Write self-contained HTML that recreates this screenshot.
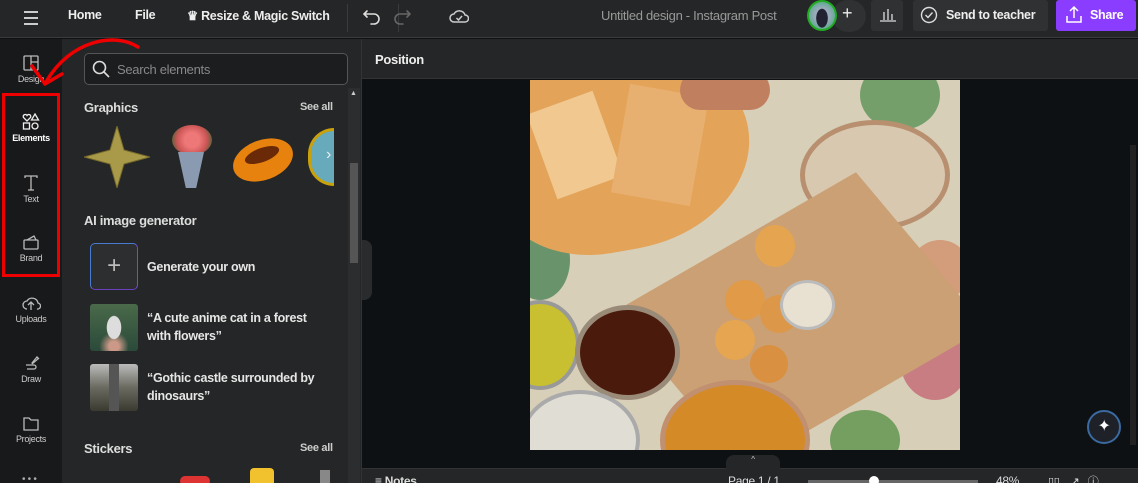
<!DOCTYPE html>
<html><head><style>
*{box-sizing:border-box;margin:0;padding:0}
html,body{width:1138px;height:483px;overflow:hidden}
body{background:#0e1114;font-family:"Liberation Sans",sans-serif;position:relative;color:#fff;letter-spacing:-0.3px}
.a{position:absolute}
.top{left:0;top:0;width:1138px;height:38px;background:#252627;border-bottom:1px solid #3a3b3d}
.tb{font-weight:bold;font-size:12.5px;color:#eee;top:8px}
.rail{left:0;top:39px;width:62px;height:444px;background:#18191b}
.ri{width:62px;text-align:center;font-size:9px;color:#ccc}
.panel{left:62px;top:39px;width:300px;height:444px;background:#252627;border-right:1px solid #333}
.h{font-weight:bold;font-size:13px;color:#ddd}
.sa{font-size:11px;font-weight:bold;color:#ccc}
.it{font-weight:bold;font-size:12.5px;color:#e6e6e6;line-height:18px}
.img div{position:absolute}
.c{border-radius:50%}
</style></head><body>
<div class="a top"></div>
<div class="a" style="left:24px;top:9px;width:14px;height:16px">
<div style="height:2px;background:#ccc;margin-top:2px"></div><div style="height:2px;background:#ccc;margin-top:4px"></div><div style="height:2px;background:#ccc;margin-top:4px"></div></div>
<div class="a tb" style="left:68px">Home</div>
<div class="a tb" style="left:135px">File</div>
<div class="a tb" style="left:187px">♛ Resize &amp; Magic Switch</div>
<div class="a" style="left:347px;top:4px;width:1px;height:28px;background:#3a3b3d"></div>
<div class="a" style="left:398px;top:4px;width:1px;height:28px;background:#3a3b3d"></div>
<svg class="a" style="left:362px;top:6px" width="60" height="20" fill="none" stroke-width="1.6" stroke-linecap="round"><path d="M5 5 L2 8 L5 11 M2 8 H12 a5 5 0 0 1 0 10 H9" stroke="#ddd"/><path d="M45 5 L48 8 L45 11 M48 8 H38 a5 5 0 0 0 0 10 H41" stroke="#666"/></svg>
<svg class="a" style="left:449px;top:6px" width="20" height="20" fill="none" stroke="#ccc" stroke-width="1.5"><path d="M5 16 a4 4 0 0 1 0-8 a6 6 0 0 1 11 1 a3.5 3.5 0 0 1 0 7 Z"/><path d="M7.5 12 l2 2 l3.5-4"/></svg>
<div class="a" style="left:601px;top:8px;font-size:13px;color:#999">Untitled design - Instagram Post</div>
<div class="a" style="left:832px;top:0px;width:34px;height:32px;border-radius:16px;background:#303133"></div>
<div class="a" style="left:807px;top:0px;width:30px;height:31px;border-radius:50%;background:radial-gradient(ellipse 8px 13px at 50% 60%,#223 70%,transparent 75%),radial-gradient(circle,#9ab 40%,#5a8 80%);border:2px solid #2a2"></div>
<div class="a" style="left:842px;top:3px;font-size:18px;color:#eee">+</div>
<div class="a" style="left:871px;top:0;width:32px;height:31px;background:#303133;border-radius:3px"></div>
<svg class="a" style="left:879px;top:7px" width="18" height="16" stroke="#ddd" stroke-width="1.3"><path d="M1 14H17M5 13V5M9 13V2M13 13V7"/></svg>
<div class="a" style="left:913px;top:0;width:135px;height:31px;background:#303133;border-radius:3px"></div>
<svg class="a" style="left:920px;top:6px" width="20" height="20" fill="none" stroke="#ddd" stroke-width="1.4"><circle cx="9" cy="9" r="7.5"/><path d="M5.5 9l2.5 2.5 4.5-5"/></svg>
<div class="a tb" style="left:946px">Send to teacher</div>
<div class="a" style="left:1056px;top:0;width:80px;height:31px;background:#8b3dff;border-radius:3px"></div>
<svg class="a" style="left:1064px;top:5px" width="20" height="20" fill="none" stroke="#fff" stroke-width="1.5"><path d="M3 11v6h14v-6M10 13V2M6 6l4-4 4 4"/></svg>
<div class="a tb" style="left:1090px;color:#fff">Share</div>

<div class="a rail"></div>
<div class="a" style="left:63px;top:44px;width:5px;height:180px;background:#555;border-radius:2px"></div>
<div class="a ri" style="left:0;top:54px"><svg width="18" height="18" fill="none" stroke="#bbb" stroke-width="1.3"><rect x="2" y="2" width="14" height="14" rx="1"/><path d="M9 2v14M9 8h7"/></svg><br>Design</div>
<div class="a ri" style="left:0;top:113px;color:#fff;font-weight:bold"><svg width="18" height="18" fill="none" stroke="#eee" stroke-width="1.3"><path d="M5 8L1.5 4.5a2 2 0 0 1 3.5-2 2 2 0 0 1 3.5 2z"/><path d="M13 1l3.5 6h-7z"/><rect x="1.5" y="10" width="6" height="6"/><circle cx="13" cy="13" r="3"/></svg><br>Elements</div>
<div class="a ri" style="left:0;top:174px"><svg width="18" height="18" fill="none" stroke="#bbb" stroke-width="1.3"><path d="M3 4V2h12v2M9 2v14M6 16h6"/></svg><br>Text</div>
<div class="a ri" style="left:0;top:233px"><svg width="18" height="18" fill="none" stroke="#bbb" stroke-width="1.3"><rect x="2" y="7" width="14" height="9" rx="1"/><path d="M5 7l7-4 2 4"/></svg><br>Brand</div>
<div class="a ri" style="left:0;top:294px"><svg width="20" height="18" fill="none" stroke="#bbb" stroke-width="1.3"><path d="M6 15a4 4 0 0 1 0-8 6 6 0 0 1 11 2 3 3 0 0 1-1 6"/><path d="M10 16V9M7 11l3-3 3 3"/></svg><br>Uploads</div>
<div class="a ri" style="left:0;top:354px"><svg width="18" height="18" fill="none" stroke="#bbb" stroke-width="1.3"><path d="M10 9l5-6 1.5 1.5-6 5zM4 11h8a2 2 0 0 1 0 4H5"/></svg><br>Draw</div>
<div class="a ri" style="left:0;top:414px"><svg width="18" height="18" fill="none" stroke="#bbb" stroke-width="1.3"><path d="M2 4h5l2 2h7v10H2z"/></svg><br>Projects</div>
<div class="a" style="left:22px;top:474px;font-size:10px;color:#aaa">• • •</div>
<div class="a" style="left:2px;top:93px;width:58px;height:184px;border:3px solid #e00"></div>

<div class="a panel"></div>
<div class="a" style="left:84px;top:53px;width:264px;height:32px;border:1px solid #555;border-radius:5px;background:#1c1d1f"></div>
<svg class="a" style="left:92px;top:60px" width="18" height="18" fill="none" stroke="#ddd" stroke-width="1.6"><circle cx="7.5" cy="7.5" r="6"/><path d="M12 12l5 5"/></svg>
<div class="a" style="left:117px;top:62px;font-size:13px;color:#888">Search elements</div>
<div class="a" style="left:348px;top:88px;width:12px;height:395px;background:#2c2d2f"></div>
<div class="a" style="left:350px;top:163px;width:8px;height:100px;background:#555"></div>
<div class="a" style="left:350px;top:90px;font-size:7px;color:#ccc">▲</div>
<div class="a h" style="left:84px;top:100px">Graphics</div>
<div class="a sa" style="left:300px;top:101px">See all</div>
<svg class="a" style="left:84px;top:126px" width="66" height="62"><polygon points="33,0 40,24 66,31 40,38 33,62 26,38 0,31 26,24" fill="#a89a48" stroke="#776a2a"/></svg>
<div class="a" style="left:172px;top:125px;width:40px;height:30px;border-radius:50%;background:radial-gradient(circle,#e77 30%,#c55 60%,#363 90%)"></div>
<div class="a" style="left:178px;top:152px;width:26px;height:36px;background:#8a9ab0;clip-path:polygon(0 0,100% 0,70% 100%,30% 100%)"></div>
<div class="a" style="left:232px;top:140px;width:62px;height:40px;border-radius:50%;background:#e8820e;transform:rotate(-20deg)"></div>
<div class="a" style="left:244px;top:148px;width:36px;height:14px;border-radius:50%;background:#6a2a08;transform:rotate(-20deg)"></div>
<div class="a" style="left:308px;top:128px;width:26px;height:58px;border-radius:29px 0 0 29px;background:#6ab;border:3px solid #c9a10c;border-right:none"></div>
<div class="a" style="left:326px;top:146px;font-size:16px;color:#eee">›</div>
<div class="a h" style="left:84px;top:213px">AI image generator</div>
<div class="a" style="left:90px;top:243px;width:48px;height:47px;border-radius:5px;border:1.5px solid #4a7ad0;border-right-color:#7a4ad0;border-bottom-color:#6a40c0;background:#2d2e30;text-align:center;font-size:24px;line-height:44px;color:#bbb;font-weight:300">+</div>
<div class="a it" style="left:147px;top:258px">Generate your own</div>
<div class="a" style="left:90px;top:304px;width:48px;height:47px;border-radius:3px;background:radial-gradient(ellipse 10px 16px at 50% 50%,#ddd 70%,transparent 75%),radial-gradient(circle at 50% 90%,#c98 10%,transparent 30%),linear-gradient(#4a6a4a,#2b4a3a)"></div>
<div class="a it" style="left:147px;top:309px">“A cute anime cat in a forest<br>with flowers”</div>
<div class="a" style="left:90px;top:364px;width:48px;height:47px;border-radius:3px;background:linear-gradient(90deg,transparent 40%,#555 40%,#555 60%,transparent 60%),linear-gradient(#bbb,#6a6a60 50%,#3a3a30)"></div>
<div class="a it" style="left:147px;top:369px">“Gothic castle surrounded by<br>dinosaurs”</div>
<div class="a h" style="left:84px;top:441px">Stickers</div>
<div class="a sa" style="left:300px;top:442px">See all</div>
<div class="a" style="left:180px;top:476px;width:30px;height:10px;background:#d33;border-radius:5px"></div>
<div class="a" style="left:250px;top:468px;width:24px;height:20px;background:#f2c12e;border-radius:4px"></div>
<div class="a" style="left:320px;top:470px;width:10px;height:14px;background:#888"></div>

<div class="a" style="left:362px;top:39px;width:776px;height:40px;background:#252627;border-bottom:1px solid #333"></div>
<div class="a h" style="left:375px;top:52px;color:#eee">Position</div>
<div class="a" style="left:362px;top:240px;width:10px;height:60px;background:#2a2b2d;border-radius:0 8px 8px 0"></div>
<div class="a" style="left:1130px;top:145px;width:6px;height:300px;background:#222"></div>

<div class="a img" style="left:530px;top:80px;width:430px;height:370px;overflow:hidden;background:#d8cfb8">
  <div class="c" style="left:330px;top:-20px;width:80px;height:70px;background:#4a8a4a;opacity:.7"></div>
  <div class="c" style="left:-20px;top:140px;width:60px;height:80px;background:#3a7a4a;opacity:.7"></div>
  <div class="c" style="left:370px;top:240px;width:70px;height:80px;background:#c05a6a;opacity:.7"></div>
  <div class="c" style="left:300px;top:330px;width:70px;height:60px;background:#4a8a3a;opacity:.7"></div>
  <div class="c" style="left:380px;top:160px;width:60px;height:60px;background:#d07a50;opacity:.6"></div>
  <div style="left:-40px;top:-30px;width:260px;height:200px;background:#e3a45a;border-radius:40% 50% 50% 40%;transform:rotate(-10deg)"></div>
  <div style="left:10px;top:20px;width:70px;height:90px;background:#f0c890;transform:rotate(-20deg)"></div>
  <div style="left:90px;top:10px;width:80px;height:110px;background:#e8b070;transform:rotate(10deg)"></div>
  <div style="left:150px;top:-10px;width:90px;height:40px;background:#c08060;border-radius:20px"></div>
  <div class="c" style="left:270px;top:40px;width:150px;height:110px;background:#d9c8b0;border:5px solid #b89070"></div>
  <div style="left:130px;top:140px;width:280px;height:200px;background:#caa074;transform:rotate(-30deg) skewX(10deg)"></div>
  <div class="c" style="left:225px;top:145px;width:40px;height:42px;background:#e5a450"></div>
  <div class="c" style="left:195px;top:200px;width:40px;height:40px;background:#e09a48"></div>
  <div class="c" style="left:230px;top:215px;width:38px;height:38px;background:#dc9848"></div>
  <div class="c" style="left:185px;top:240px;width:40px;height:40px;background:#e6a550"></div>
  <div class="c" style="left:220px;top:265px;width:38px;height:38px;background:#d99040"></div>
  <div class="c" style="left:250px;top:200px;width:55px;height:50px;background:#e8e0d0;border:3px solid #bbb"></div>
  <div class="c" style="left:-30px;top:220px;width:80px;height:90px;background:#c8c030;border:4px solid #999"></div>
  <div class="c" style="left:45px;top:225px;width:105px;height:95px;background:#4a1a0c;border:5px solid #9a8a78"></div>
  <div class="c" style="left:-10px;top:310px;width:120px;height:100px;background:#e0ddd4;border:4px solid #aaa"></div>
  <div class="c" style="left:130px;top:300px;width:150px;height:120px;background:#d58a28;border:5px solid #c09070"></div>
</div>

<svg class="a" style="left:20px;top:36px" width="125" height="56" fill="none" stroke="#e00" stroke-width="3.5" stroke-linecap="round" stroke-linejoin="round"><path d="M118 11 C95 -4 50 4 26 46"/><path d="M12 30 L25 48 L42 38"/></svg>

<div class="a" style="left:1087px;top:410px;width:34px;height:34px;border-radius:50%;background:#1e2128;border:2px solid #3a6aa0;text-align:center;line-height:30px;font-size:16px">✦</div>
<div class="a" style="left:362px;top:468px;width:776px;height:15px;background:#252627;border-top:1px solid #333"></div>
<div class="a" style="left:726px;top:455px;width:54px;height:14px;background:#252627;border-radius:8px 8px 0 0;text-align:center;font-size:8px;color:#ccc">^</div>
<div class="a" style="left:375px;top:474px;font-size:12px;font-weight:bold;color:#ddd">≡ Notes</div>
<div class="a" style="left:728px;top:474px;font-size:12px;color:#ddd">Page 1 / 1</div>
<div class="a" style="left:808px;top:480px;width:170px;height:3px;background:#666"></div>
<div class="a" style="left:869px;top:476px;width:10px;height:10px;background:#fff;border-radius:50%"></div>
<div class="a" style="left:996px;top:474px;font-size:12px;color:#ddd">48%</div>
<div class="a" style="left:1048px;top:473px;font-size:11px;color:#ddd">▯▯ &nbsp;&nbsp; ↗ &nbsp; ⓘ</div>
</body></html>
